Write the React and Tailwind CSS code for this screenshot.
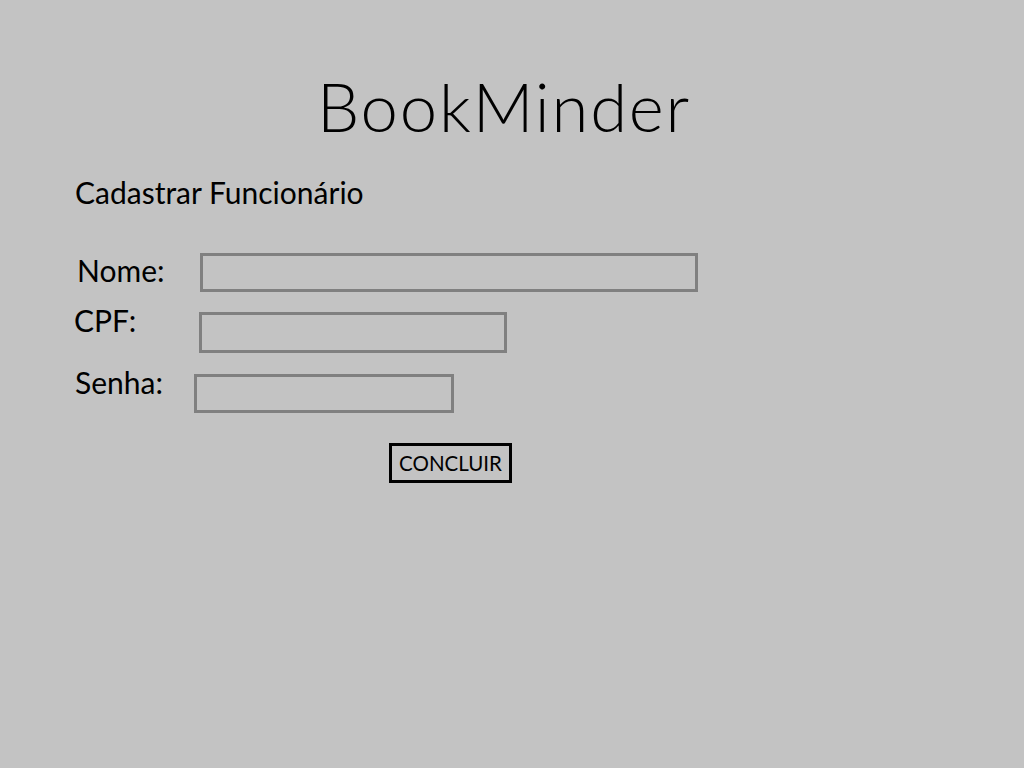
import React from "react";

const fieldBox = "h-[39px] border-[3px] border-[#808080] bg-transparent outline-none";

const App = () => {
  return (
    <div className="w-[1024px] h-[768px] bg-[#c3c3c3] text-black overflow-hidden font-['Lato','Liberation_Sans',sans-serif]">
      <h1 className="pt-[66px] pl-[317px] text-[67px] leading-[80px] font-light tracking-[1.8px]">
        BookMinder
      </h1>

      <h2 className="mt-[28px] ml-[75px] text-[30px] leading-[36px]">Cadastrar Funcionário</h2>

      <form className="flex flex-col" onSubmit={(e) => e.preventDefault()}>
        <div className="flex items-start mt-[43px]">
          <label className="ml-[77px] w-[123px] text-[30px] leading-[34px]">Nome:</label>
          <input className={`${fieldBox} w-[498px]`} />
        </div>

        <div className="flex items-start mt-[20px]">
          <label className="ml-[74px] w-[125px] text-[30px] leading-[24px] mt-[-4px]">CPF:</label>
          <input className={`${fieldBox} w-[308px] h-[41px]`} />
        </div>

        <div className="flex items-start mt-[21px]">
          <label className="ml-[75px] w-[119px] text-[30px] leading-[24px] mt-[-4px]">Senha:</label>
          <input className={`${fieldBox} w-[260px] h-[37px]`} />
        </div>

        <div className="flex mt-[30px] pl-[389px]">
          <button className="w-[123px] h-[40px] border-[3px] border-black text-[20.5px] leading-none">
            CONCLUIR
          </button>
        </div>
      </form>
    </div>
  );
};

export default App;
